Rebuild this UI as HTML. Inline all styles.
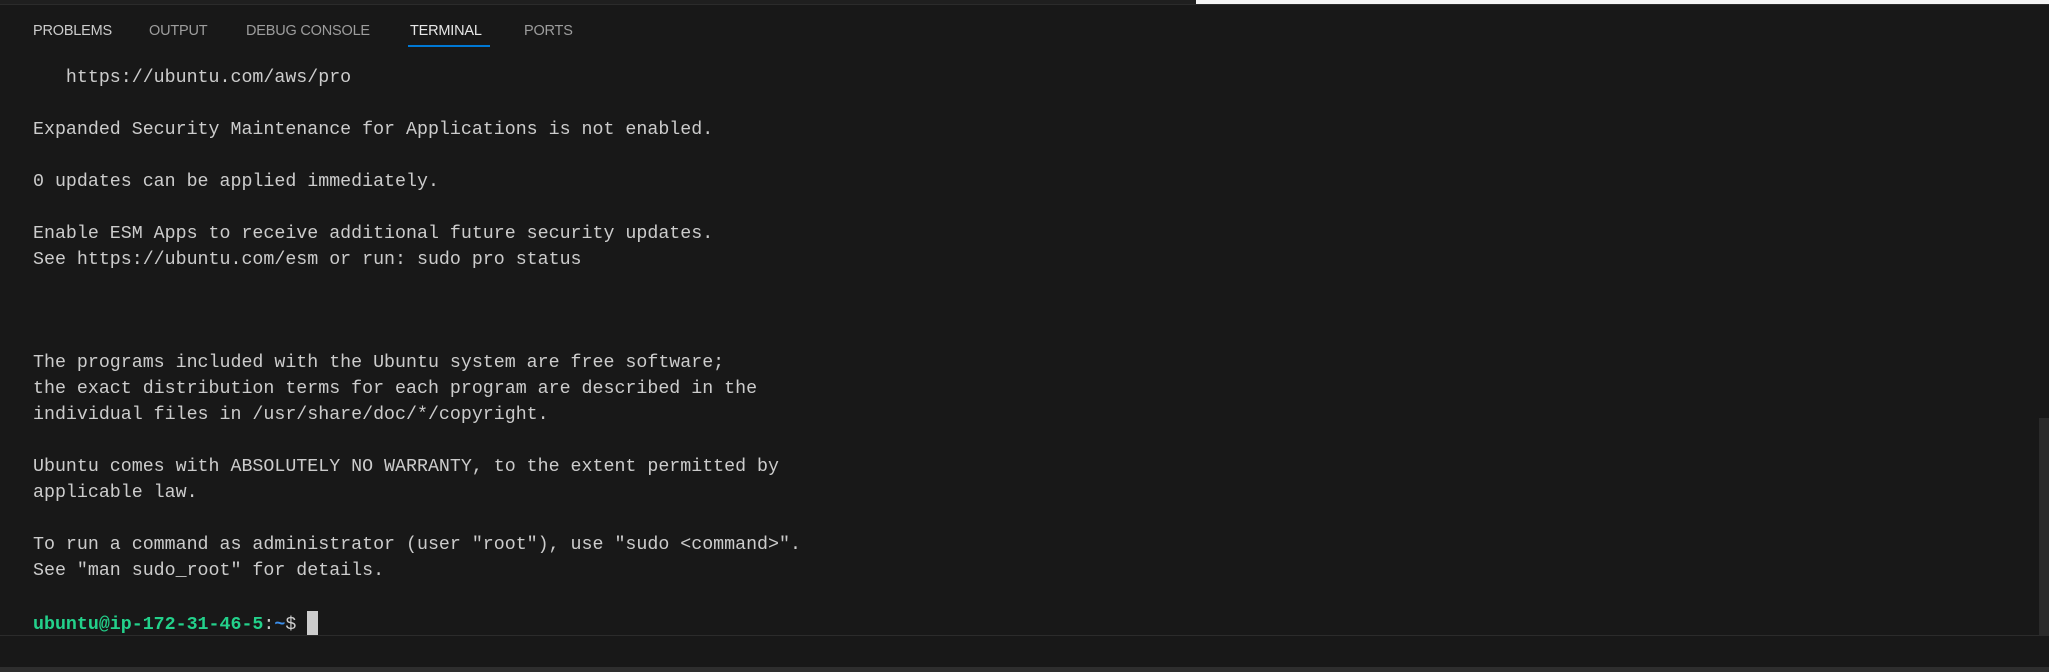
<!DOCTYPE html>
<html><head><meta charset="utf-8"><style>
html,body{margin:0;padding:0;width:2049px;height:672px;background:#181818;overflow:hidden;position:relative}
.top{position:absolute;left:0;top:0;width:2049px;height:4px;background:#1f1f1f;border-bottom:1px solid #2b2b2b}
.white{position:absolute;left:1196px;top:0;width:853px;height:4px;background:#f4f4f4}
.tab{position:absolute;top:23px;font:14.5px "Liberation Sans",sans-serif;color:#9d9d9d;letter-spacing:-0.2px}
.tab.a{color:#e7e7e7}
.ul{position:absolute;left:408px;top:45px;width:82px;height:1.5px;background:#0078d4}
.term{position:absolute;left:33px;top:66px;font:18.3px/25.94px "Liberation Mono",monospace;color:#cccccc;white-space:pre}
.g{color:#23d18b;font-weight:bold}.b{color:#3b8eea;font-weight:bold}
.cur{display:inline-block;width:11px;height:24px;background:#cccccc;vertical-align:-6px}
.bl{position:absolute;left:0;top:635px;width:2049px;height:1px;background:#2b2b2b}
.bb{position:absolute;left:0;top:667px;width:2049px;height:5px;background:#2e2e2e}
.sb{position:absolute;left:2039px;top:418px;width:10px;height:217px;background:#2a2a2a}
</style></head><body>
<div class="top"></div><div class="white"></div>
<div class="tab" style="left:33px;color:#cccccc">PROBLEMS</div>
<div class="tab" style="left:149px">OUTPUT</div>
<div class="tab" style="left:246px">DEBUG CONSOLE</div>
<div class="tab a" style="left:410px">TERMINAL</div>
<div class="tab" style="left:524px">PORTS</div>
<div class="ul"></div>
<div class="term">   https://ubuntu.com/aws/pro

Expanded Security Maintenance for Applications is not enabled.

0 updates can be applied immediately.

Enable ESM Apps to receive additional future security updates.
See https://ubuntu.com/esm or run: sudo pro status



The programs included with the Ubuntu system are free software;
the exact distribution terms for each program are described in the
individual files in /usr/share/doc/*/copyright.

Ubuntu comes with ABSOLUTELY NO WARRANTY, to the extent permitted by
applicable law.

To run a command as administrator (user "root"), use "sudo &lt;command&gt;".
See "man sudo_root" for details.

<span class="g">ubuntu@ip-172-31-46-5</span>:<span class="b">~</span>$ <span class="cur"></span></div>
<div class="sb"></div>
<div class="bl"></div><div class="bb"></div>
</body></html>
